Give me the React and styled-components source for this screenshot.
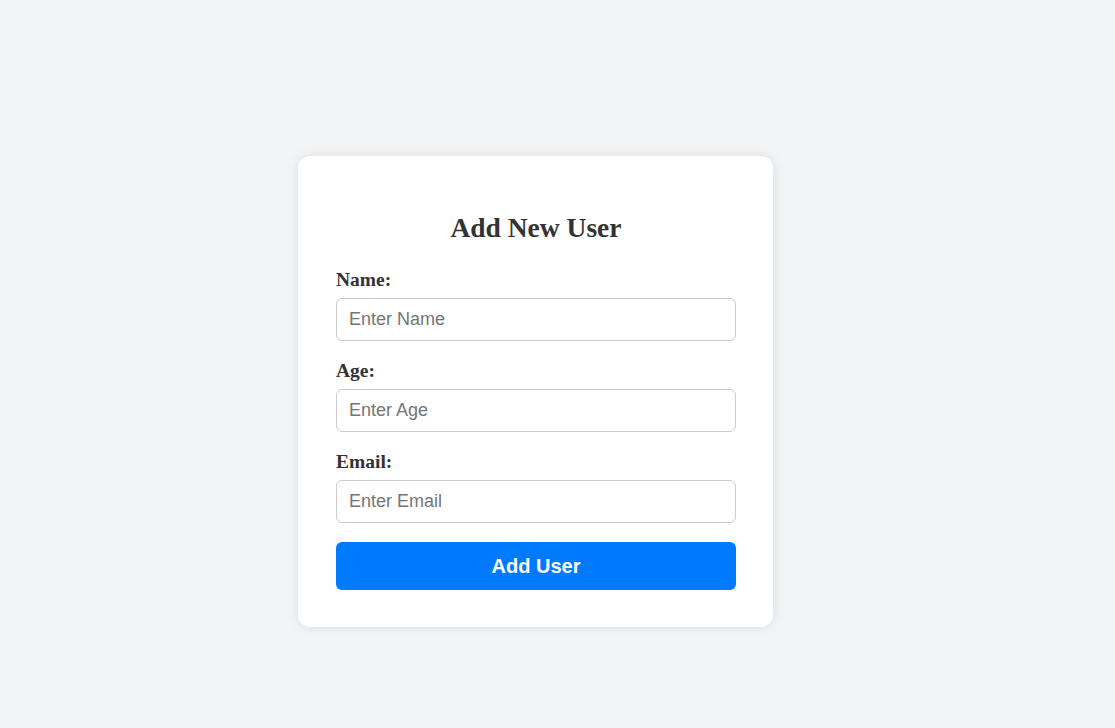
import { useState } from "react"
import styled, { createGlobalStyle } from 'styled-components';

export default function App() {
    const [user, setUser] = useState({ name: "", age: "", email: "" });

    function mudar(campo, valor) {
        setUser({ ...user, [campo]: valor });
    }

    function enviar(e) {
        e.preventDefault();
    }

    return (
        <>
            <GlobalStyle />
            <Page>
                <Card>
                    <Title>Add New User</Title>
                    <Form onSubmit={enviar}>
                        <Field>
                            <Label htmlFor="name">Name:</Label>
                            <Input id="name" type="text" placeholder="Enter Name" value={user.name} onChange={(e) => mudar("name", e.target.value)} />
                        </Field>
                        <Field>
                            <Label htmlFor="age">Age:</Label>
                            <Input id="age" type="number" placeholder="Enter Age" value={user.age} onChange={(e) => mudar("age", e.target.value)} />
                        </Field>
                        <Field>
                            <Label htmlFor="email">Email:</Label>
                            <Input id="email" type="email" placeholder="Enter Email" value={user.email} onChange={(e) => mudar("email", e.target.value)} />
                        </Field>
                        <Button type="submit">Add User</Button>
                    </Form>
                </Card>
            </Page>
        </>
    )
}

const GlobalStyle = createGlobalStyle`
    body {
        margin: 0;
        background-color: #F3F4F6;
        font-family: 'Liberation Serif', 'Times New Roman', serif;
    }
`

const Page = styled.div`
    display: flex;
    justify-content: center;
    align-items: flex-start;
    min-height: 100vh;
    padding: 156px 44px 0 0;
    box-sizing: border-box;
`

const Card = styled.div`
    width: 475px;
    padding: 30px 37px 37px 38px;
    box-sizing: border-box;
    background-color: #FFFFFF;
    border-radius: 12px;
    box-shadow: 0 0 12px rgba(0, 0, 0, 0.1);
`

const Title = styled.h2`
    margin: 26px 0 25px;
    text-align: center;
    font-family: 'Liberation Serif', 'Times New Roman', serif;
    font-size: 27.5px;
    font-weight: 700;
    line-height: 32px;
    color: #333333;
`

const Form = styled.form`
    display: flex;
    flex-direction: column;
`

const Field = styled.div`
    display: flex;
    flex-direction: column;
    margin-bottom: 19px;
`

const Label = styled.label`
    margin-bottom: 7px;
    font-family: 'Liberation Serif', 'Times New Roman', serif;
    font-size: 19.5px;
    font-weight: 700;
    line-height: 22px;
    color: #333333;
`

const Input = styled.input`
    width: 100%;
    height: 43px;
    padding: 0 12px;
    box-sizing: border-box;
    border: 1px solid #CCCCCC;
    border-radius: 6px;
    font-family: 'Liberation Sans', Arial, sans-serif;
    font-size: 18px;
    color: #333333;
    outline: none;

    &::placeholder {
        color: #757575;
    }

    &::-webkit-outer-spin-button,
    &::-webkit-inner-spin-button {
        -webkit-appearance: none;
        margin: 0;
    }
`

const Button = styled.button`
    height: 48px;
    border: none;
    border-radius: 6px;
    background-color: #007BFF;
    color: #FFFFFF;
    font-family: 'Liberation Sans', Arial, sans-serif;
    font-size: 20px;
    font-weight: 700;
    cursor: pointer;
`
